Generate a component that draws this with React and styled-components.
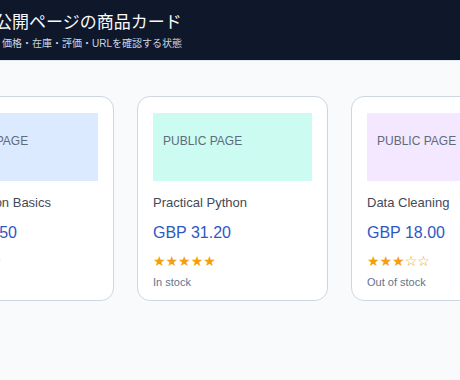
import React from "react";
import styled, { createGlobalStyle } from "styled-components";

const Global = createGlobalStyle`
  html, body { margin: 0; padding: 0; }
  body {
    background: #f8fafc;
    font-family: "Liberation Sans", "Noto Sans CJK JP", sans-serif;
    overflow: hidden;
  }
`;

const Header = styled.header`
  background: #0f172a;
  height: 60px;
  border-bottom: 1px solid #e2e8f0;
  display: flex;
  justify-content: center;
  overflow: hidden;
`;

const HeaderInner = styled.div`
  flex: 0 0 470px;
  display: flex;
  flex-direction: column;
  padding-top: 9px;
`;

const Title = styled.h1`
  margin: 0;
  font-family: "Noto Sans CJK JP", sans-serif;
  font-size: 17px;
  line-height: 24px;
  font-weight: 400;
  color: #f8fafc;
`;

const Subtitle = styled.p`
  margin: 4px 0 0;
  padding-left: 7px;
  font-family: "Liberation Sans", "Noto Sans CJK JP", sans-serif;
  font-size: 10px;
  line-height: 14px;
  color: #cbd5e1;
`;

const Main = styled.main`
  padding: 35px 0 0 5px;
  display: flex;
  justify-content: center;
  gap: 23px;
  overflow: hidden;
`;

const Card = styled.article`
  flex: 0 0 191px;
  box-sizing: border-box;
  background: #ffffff;
  border: 1px solid #cfd6e1;
  border-radius: 13px;
  padding: 16px 15px 11px;
  display: flex;
  flex-direction: column;
`;

const Thumb = styled.div`
  box-sizing: border-box;
  height: 68px;
  background: ${(p) => p.$tint};
  padding: 20px 10px 0;
  font-size: 12px;
  line-height: 16px;
  color: #5f6b7b;
`;

const Name = styled.div`
  margin-top: 14px;
  font-size: 13px;
  line-height: 16px;
  color: #3f4a5a;
`;

const Price = styled.div`
  margin-top: 12px;
  font-size: 16px;
  line-height: 20px;
  color: #2f57c4;
`;

const Stars = styled.div`
  margin-top: 9px;
  font-family: "DejaVu Sans", sans-serif;
  font-size: 14px;
  line-height: 18px;
  color: #f59e0b;
`;

const Stock = styled.div`
  margin-top: 5px;
  font-size: 11px;
  line-height: 14px;
  color: #64748b;
`;

const products = [
  { name: "Intro Python Basics", price: "GBP 24.50", rating: 4, stock: "In stock", tint: "#dbeafe" },
  { name: "Practical Python", price: "GBP 31.20", rating: 5, stock: "In stock", tint: "#ccfbf1" },
  { name: "Data Cleaning", price: "GBP 18.00", rating: 3, stock: "Out of stock", tint: "#f3e8ff" },
];

const starText = (n) => "★".repeat(n) + "☆".repeat(5 - n);

export default function App() {
  return (
    <>
      <Global />
      <Header>
        <HeaderInner>
          <Title>公開ページの商品カード</Title>
          <Subtitle>価格・在庫・評価・URLを確認する状態</Subtitle>
        </HeaderInner>
      </Header>
      <Main>
        {products.map((p) => (
          <Card key={p.name}>
            <Thumb $tint={p.tint}>PUBLIC PAGE</Thumb>
            <Name>{p.name}</Name>
            <Price>{p.price}</Price>
            <Stars>{starText(p.rating)}</Stars>
            <Stock>{p.stock}</Stock>
          </Card>
        ))}
      </Main>
    </>
  );
}
